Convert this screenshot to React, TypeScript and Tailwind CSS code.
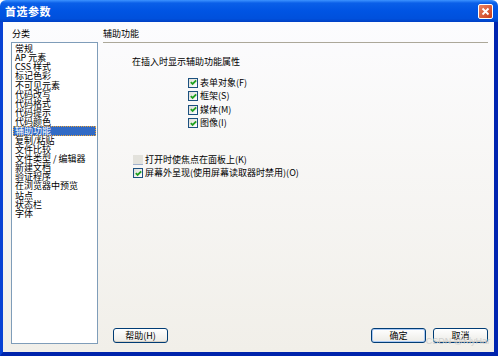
import { ReactNode } from 'react'

const categories = [
  '常规',
  'AP 元素',
  'CSS 样式',
  '标记色彩',
  '不可见元素',
  '代码改写',
  '代码格式',
  '代码提示',
  '代码颜色',
  '辅助功能',
  '复制/粘贴',
  '文件比较',
  '文件类型 / 编辑器',
  '新建文档',
  '验证程序',
  '在浏览器中预览',
  '站点',
  '状态栏',
  '字体',
]

function CheckBox({ checked, disabled }: { checked?: boolean; disabled?: boolean }) {
  if (disabled) {
    return <span className="block w-[10px] h-[10px] bg-[#e3e2dc] border-b border-[#9fb0cc] shrink-0" />
  }
  return (
    <span className="flex items-center justify-center w-[10px] h-[10px] border border-[#1c5180] bg-gradient-to-br from-[#dcdcd7] to-white shrink-0">
      {checked && (
        <svg width="7" height="7" viewBox="0 0 7 7">
          <path d="M0.8 3.2 L2.6 5 L6.2 1.4" stroke="#21a121" strokeWidth="1.8" fill="none" />
        </svg>
      )}
    </span>
  )
}

function CheckRow({ label, checked, disabled }: { label: string; checked?: boolean; disabled?: boolean }) {
  return (
    <div className="flex items-center gap-[2px] h-[13.5px]">
      <CheckBox checked={checked} disabled={disabled} />
      <span className="leading-[12px]">{label}</span>
    </div>
  )
}

function XpButton({ children, focused }: { children: ReactNode; focused?: boolean }) {
  return (
    <button
      className={`w-[55px] h-[15px] rounded-[3px] border border-[#003c74] bg-gradient-to-b from-white to-[#ecebe6] text-[9px] leading-[12px] text-black ${
        focused ? 'shadow-[inset_0_0_0_1px_#a9c9f5]' : 'shadow-[inset_0_-1px_0_#d6d0c5]'
      }`}
    >
      {children}
    </button>
  )
}

export default function App() {
  return (
    <div
      className="relative w-[498px] h-[356px] flex flex-col text-[9px] text-black select-none"
      style={{ fontFamily: '"Noto Sans CJK SC", "Liberation Sans", sans-serif' }}
    >
      {/* title bar */}
      <div className="h-[22px] flex items-center justify-between pl-[5px] pr-[5px] rounded-t-[6px] bg-[linear-gradient(to_bottom,#3d93ff_0%,#0a5fe8_14%,#0054e3_50%,#0050dc_85%,#0040c4_100%)]">
        <span className="text-white font-bold text-[11px] leading-[14px] tracking-[0.5px]">首选参数</span>
        <span className="flex items-center justify-center w-[15px] h-[15px] rounded-[2px] border border-white bg-gradient-to-br from-[#e9825f] to-[#c93a16]">
          <svg width="9" height="9" viewBox="0 0 9 9">
            <path d="M1.5 1.5 L7.5 7.5 M7.5 1.5 L1.5 7.5" stroke="white" strokeWidth="1.8" />
          </svg>
        </span>
      </div>

      {/* body */}
      <div className="flex-1 flex border-l-[3px] border-l-[#0842d4] border-r-[4px] border-r-[#0024b0] border-b-[4px] border-b-[#0024ac] bg-gradient-to-b from-[#fcfcfe] to-[#f1efe9] pt-[6px] pb-[8px] pl-[8px] pr-[6px] gap-[5px]">
        {/* categories */}
        <div className="w-[87px] flex flex-col">
          <div className="h-[14px] leading-[12px] pl-[1px]">分类</div>
          <div className="flex-1 border border-[#7f9db9] bg-white pt-[1px] px-[1px]">
            {categories.map((c) => (
              <div
                key={c}
                className={`h-[9.17px] leading-[9px] pl-[2px] whitespace-nowrap ${
                  c === '辅助功能' ? 'bg-[#316ac5] text-white outline outline-1 outline-dotted outline-[#e8a33c] -outline-offset-1' : ''
                }`}
              >
                {c}
              </div>
            ))}
          </div>
        </div>

        {/* panel */}
        <div className="flex-1 flex flex-col">
          <div className="h-[15px] leading-[12px] border-b border-[#aca899]">辅助功能</div>

          <div className="mt-[13px] pl-[29px] leading-[12px]">在插入时显示辅助功能属性</div>

          <div className="mt-[8px] pl-[85px] flex flex-col">
            <CheckRow label="表单对象(F)" checked />
            <CheckRow label="框架(S)" checked />
            <CheckRow label="媒体(M)" checked />
            <CheckRow label="图像(I)" checked />
          </div>

          <div className="mt-[23px] pl-[30px] flex flex-col">
            <CheckRow label="打开时使焦点在面板上(K)" disabled />
            <CheckRow label="屏幕外呈现(使用屏幕读取器时禁用)(O)" checked />
          </div>

          <div className="mt-auto mb-[1px] flex items-center pl-[10px]">
            <XpButton>帮助(H)</XpButton>
            <div className="ml-auto flex gap-[7px]">
              <XpButton focused>确定</XpButton>
              <XpButton>取消</XpButton>
            </div>
          </div>
        </div>
      </div>

      <span className="absolute right-[8px] bottom-[10px] text-[9px] leading-[10px] text-[#cfcfcf]" style={{ fontFamily: '"Liberation Sans", sans-serif' }}>
        CSDN @KlyHar
      </span>
    </div>
  )
}
